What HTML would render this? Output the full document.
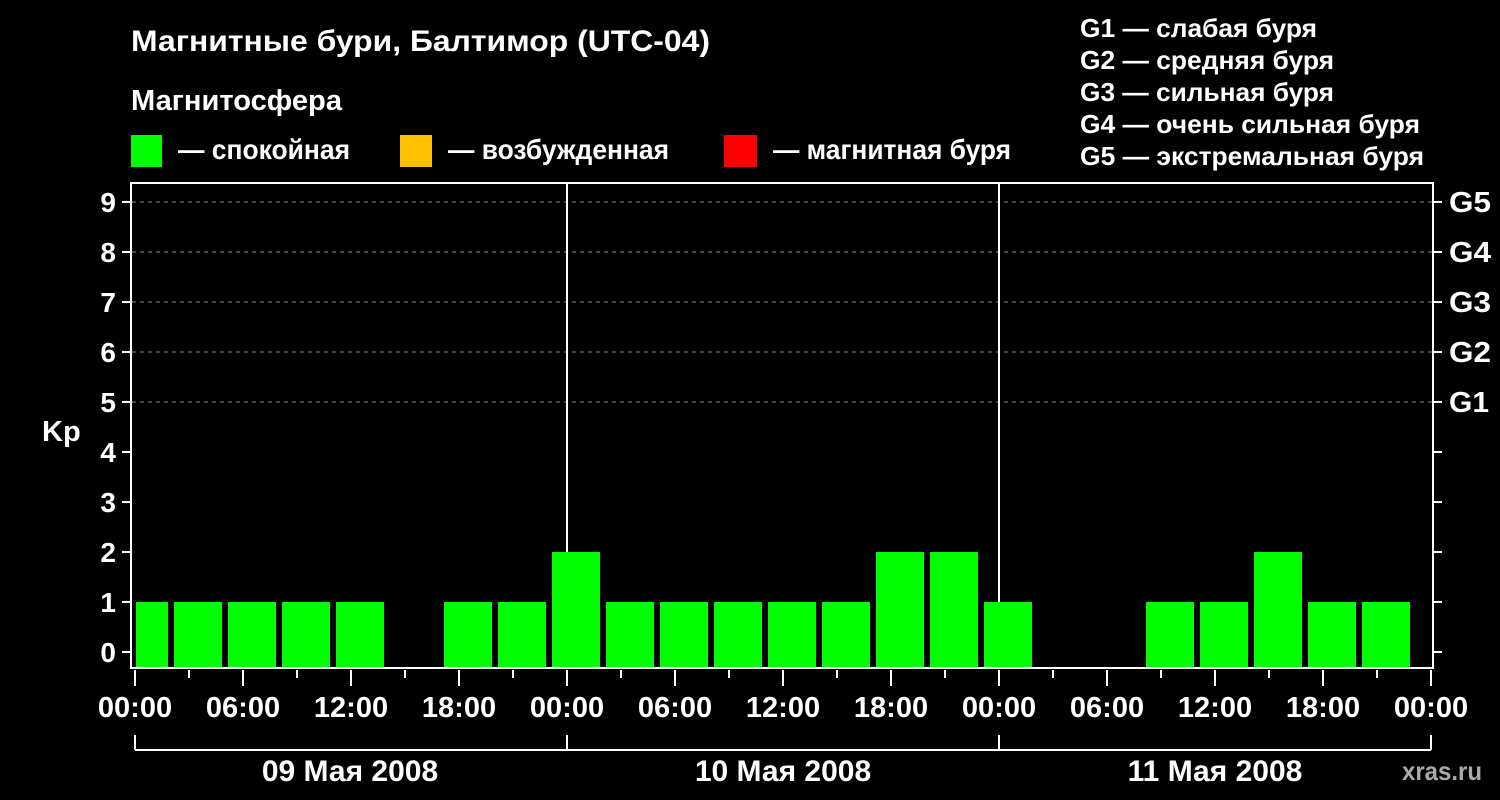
<!DOCTYPE html>
<html><head><meta charset="utf-8"><style>
html,body{margin:0;padding:0;background:#000;}
svg{display:block;}
text{font-family:"Liberation Sans",Arial,sans-serif;font-weight:bold;fill:#fff;}
</style></head><body>
<svg width="1500" height="800" viewBox="0 0 1500 800" xmlns="http://www.w3.org/2000/svg">
<rect width="1500" height="800" fill="#000"/>
<text x="131" y="51" font-size="30" textLength="579" lengthAdjust="spacingAndGlyphs">Магнитные бури, Балтимор (UTC-04)</text>
<text x="131" y="110" font-size="29" textLength="211" lengthAdjust="spacingAndGlyphs">Магнитосфера</text>
<rect x="131" y="135" width="31" height="32" fill="#00ff00"/>
<rect x="400" y="135" width="32" height="32" fill="#ffc000"/>
<rect x="724" y="135" width="33" height="32" fill="#ff0000"/>
<text x="178" y="159" font-size="28" textLength="172" lengthAdjust="spacingAndGlyphs">— спокойная</text>
<text x="448" y="159" font-size="28" textLength="221" lengthAdjust="spacingAndGlyphs">— возбужденная</text>
<text x="773" y="159" font-size="28" textLength="238" lengthAdjust="spacingAndGlyphs">— магнитная буря</text>
<g font-size="26">
<text x="1080" y="37" textLength="237" lengthAdjust="spacingAndGlyphs">G1 — слабая буря</text>
<text x="1080" y="69" textLength="254" lengthAdjust="spacingAndGlyphs">G2 — средняя буря</text>
<text x="1080" y="101" textLength="254" lengthAdjust="spacingAndGlyphs">G3 — сильная буря</text>
<text x="1080" y="133" textLength="340" lengthAdjust="spacingAndGlyphs">G4 — очень сильная буря</text>
<text x="1080" y="165" textLength="344" lengthAdjust="spacingAndGlyphs">G5 — экстремальная буря</text>
</g>
<g stroke="#888" stroke-width="1" stroke-dasharray="4,4">
<line x1="132" y1="202" x2="1432" y2="202"/>
<line x1="132" y1="252" x2="1432" y2="252"/>
<line x1="132" y1="302" x2="1432" y2="302"/>
<line x1="132" y1="352" x2="1432" y2="352"/>
<line x1="132" y1="402" x2="1432" y2="402"/>
</g>
<g stroke="#fff" stroke-width="2" fill="none">
<line x1="567" y1="183" x2="567" y2="668"/>
<line x1="999" y1="183" x2="999" y2="668"/>
</g>
<g fill="#00ff00">
<rect x="136" y="602" width="32" height="66"/>
<rect x="174" y="602" width="48" height="66"/>
<rect x="228" y="602" width="48" height="66"/>
<rect x="282" y="602" width="48" height="66"/>
<rect x="336" y="602" width="48" height="66"/>
<rect x="444" y="602" width="48" height="66"/>
<rect x="498" y="602" width="48" height="66"/>
<rect x="552" y="552" width="48" height="116"/>
<rect x="606" y="602" width="48" height="66"/>
<rect x="660" y="602" width="48" height="66"/>
<rect x="714" y="602" width="48" height="66"/>
<rect x="768" y="602" width="48" height="66"/>
<rect x="822" y="602" width="48" height="66"/>
<rect x="876" y="552" width="48" height="116"/>
<rect x="930" y="552" width="48" height="116"/>
<rect x="984" y="602" width="48" height="66"/>
<rect x="1146" y="602" width="48" height="66"/>
<rect x="1200" y="602" width="48" height="66"/>
<rect x="1254" y="552" width="48" height="116"/>
<rect x="1308" y="602" width="48" height="66"/>
<rect x="1362" y="602" width="48" height="66"/>
</g>
<g stroke="#fff" stroke-width="2" fill="none">
<polyline points="132,183 1433,183 1433,668"/>
<line x1="131" y1="182" x2="131" y2="669"/>
<line x1="130" y1="668" x2="1434" y2="668"/>
</g>
<g stroke="#fff" stroke-width="2">
<line x1="122" y1="652" x2="131" y2="652"/><line x1="122" y1="602" x2="131" y2="602"/>
<line x1="122" y1="552" x2="131" y2="552"/><line x1="122" y1="502" x2="131" y2="502"/>
<line x1="122" y1="452" x2="131" y2="452"/><line x1="122" y1="402" x2="131" y2="402"/>
<line x1="122" y1="352" x2="131" y2="352"/><line x1="122" y1="302" x2="131" y2="302"/>
<line x1="122" y1="252" x2="131" y2="252"/><line x1="122" y1="202" x2="131" y2="202"/>
<line x1="1433" y1="652" x2="1442" y2="652"/><line x1="1433" y1="602" x2="1442" y2="602"/>
<line x1="1433" y1="552" x2="1442" y2="552"/><line x1="1433" y1="502" x2="1442" y2="502"/>
<line x1="1433" y1="452" x2="1442" y2="452"/><line x1="1433" y1="402" x2="1442" y2="402"/>
<line x1="1433" y1="352" x2="1442" y2="352"/><line x1="1433" y1="302" x2="1442" y2="302"/>
<line x1="1433" y1="252" x2="1442" y2="252"/><line x1="1433" y1="202" x2="1442" y2="202"/>
<line x1="135" y1="670" x2="135" y2="686"/><line x1="189" y1="670" x2="189" y2="678"/>
<line x1="243" y1="670" x2="243" y2="686"/><line x1="297" y1="670" x2="297" y2="678"/>
<line x1="351" y1="670" x2="351" y2="686"/><line x1="405" y1="670" x2="405" y2="678"/>
<line x1="459" y1="670" x2="459" y2="686"/><line x1="513" y1="670" x2="513" y2="678"/>
<line x1="567" y1="670" x2="567" y2="686"/><line x1="621" y1="670" x2="621" y2="678"/>
<line x1="675" y1="670" x2="675" y2="686"/><line x1="729" y1="670" x2="729" y2="678"/>
<line x1="783" y1="670" x2="783" y2="686"/><line x1="837" y1="670" x2="837" y2="678"/>
<line x1="891" y1="670" x2="891" y2="686"/><line x1="945" y1="670" x2="945" y2="678"/>
<line x1="999" y1="670" x2="999" y2="686"/><line x1="1053" y1="670" x2="1053" y2="678"/>
<line x1="1107" y1="670" x2="1107" y2="686"/><line x1="1161" y1="670" x2="1161" y2="678"/>
<line x1="1215" y1="670" x2="1215" y2="686"/><line x1="1269" y1="670" x2="1269" y2="678"/>
<line x1="1323" y1="670" x2="1323" y2="686"/><line x1="1377" y1="670" x2="1377" y2="678"/>
<line x1="1431" y1="670" x2="1431" y2="686"/>
</g>
<g stroke="#fff" stroke-width="2" fill="none">
<line x1="135" y1="750" x2="1431" y2="750"/>
<line x1="135" y1="735" x2="135" y2="750"/>
<line x1="567" y1="735" x2="567" y2="750"/>
<line x1="999" y1="735" x2="999" y2="750"/>
<line x1="1431" y1="735" x2="1431" y2="750"/>
</g>
<g font-size="28" text-anchor="end">
<text x="116" y="662">0</text><text x="116" y="612">1</text><text x="116" y="562">2</text>
<text x="116" y="512">3</text><text x="116" y="462">4</text><text x="116" y="412">5</text>
<text x="116" y="362">6</text><text x="116" y="312">7</text><text x="116" y="262">8</text>
<text x="116" y="212">9</text>
</g>
<text x="42" y="441" font-size="29">Kp</text>
<g font-size="29">
<text x="1449" y="212" textLength="42" lengthAdjust="spacingAndGlyphs">G5</text><text x="1449" y="262" textLength="42" lengthAdjust="spacingAndGlyphs">G4</text><text x="1449" y="312" textLength="42" lengthAdjust="spacingAndGlyphs">G3</text>
<text x="1449" y="362" textLength="42" lengthAdjust="spacingAndGlyphs">G2</text><text x="1449" y="412" textLength="40" lengthAdjust="spacingAndGlyphs">G1</text>
</g>
<g font-size="29" text-anchor="middle">
<text x="135" y="717">00:00</text><text x="243" y="717">06:00</text><text x="351" y="717">12:00</text>
<text x="459" y="717">18:00</text><text x="567" y="717">00:00</text><text x="675" y="717">06:00</text>
<text x="783" y="717">12:00</text><text x="891" y="717">18:00</text><text x="999" y="717">00:00</text>
<text x="1107" y="717">06:00</text><text x="1215" y="717">12:00</text><text x="1323" y="717">18:00</text>
<text x="1431" y="717">00:00</text>
</g>
<g font-size="30" text-anchor="middle">
<text x="350" y="781">09 Мая 2008</text>
<text x="783" y="781">10 Мая 2008</text>
<text x="1215" y="781">11 Мая 2008</text>
</g>
<text x="1402" y="780" font-size="26" style="fill:#aaa" textLength="80" lengthAdjust="spacingAndGlyphs">xras.ru</text>
</svg>
</body></html>
